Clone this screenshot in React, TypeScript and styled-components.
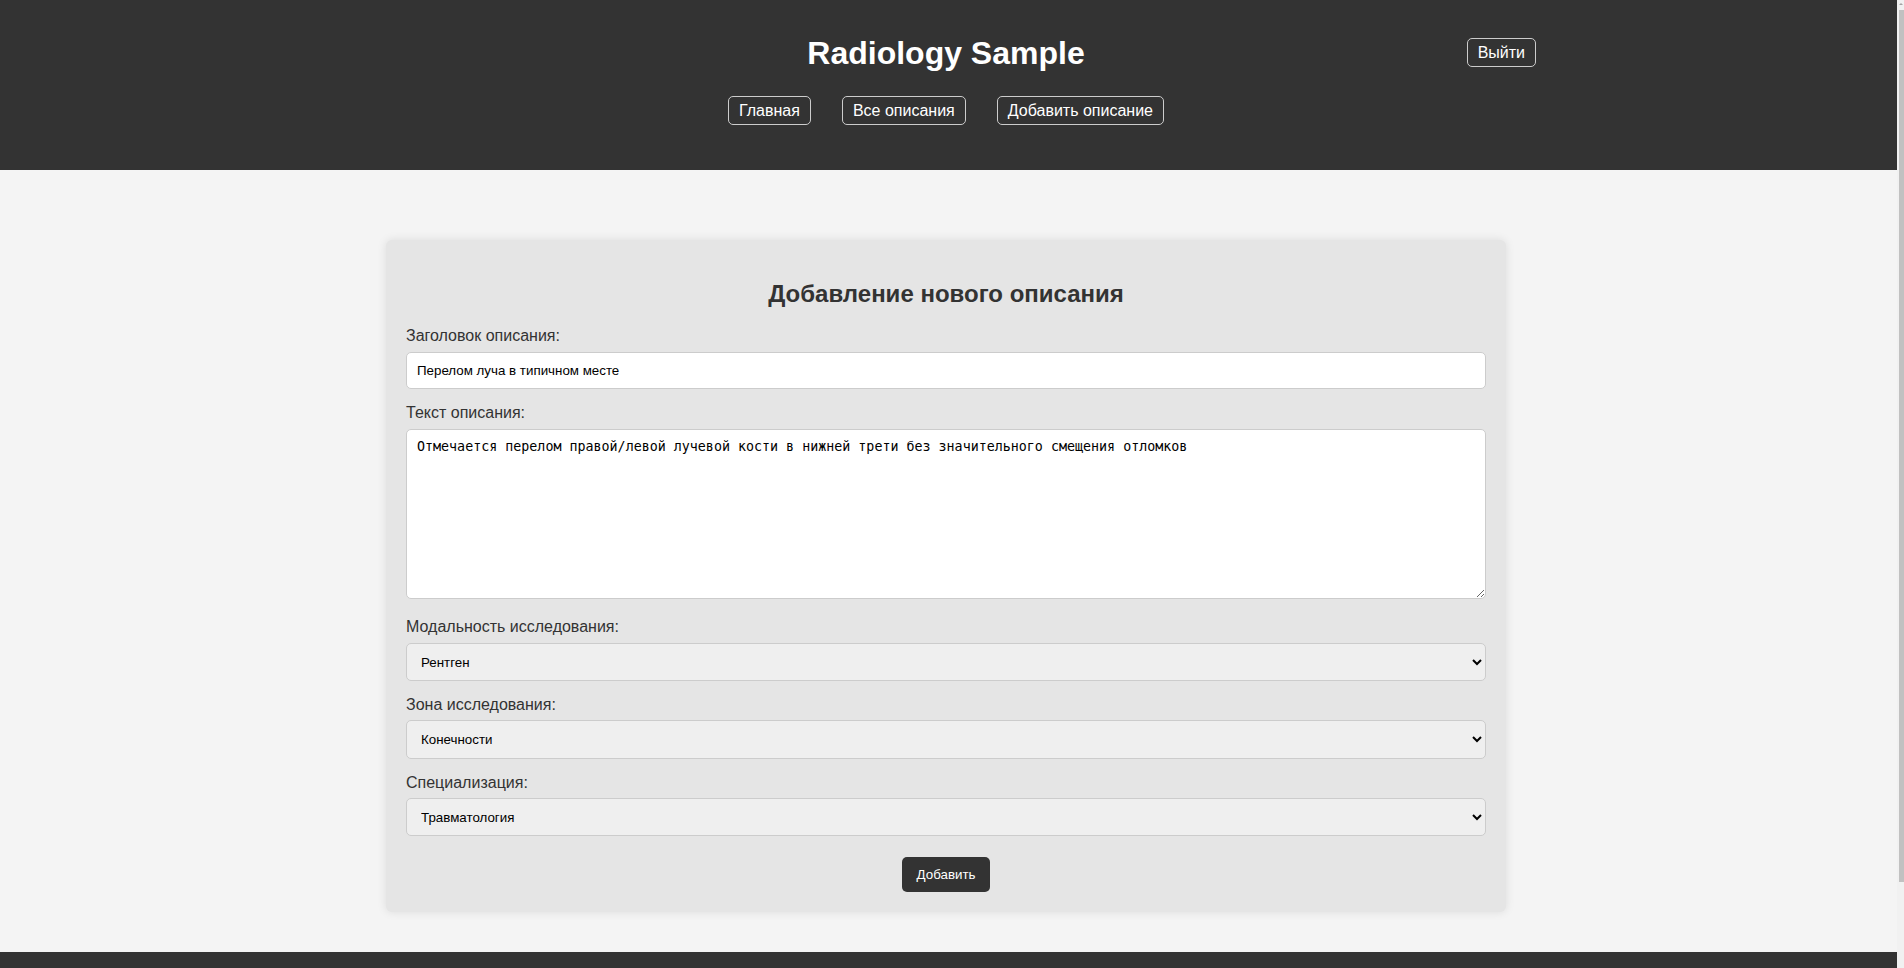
import React from "react";
import styled, { createGlobalStyle } from "styled-components";

const GlobalStyle = createGlobalStyle`
  html, body {
    margin: 0;
    padding: 0;
    overflow: hidden;
  }
  body {
    font-family: "Liberation Sans", Arial, sans-serif;
    background: #f4f4f4;
    color: #333;
  }
  * { box-sizing: border-box; }
`;

const Viewport = styled.div`
  display: flex;
  height: 100vh;
`;

const Page = styled.div`
  flex: 1;
  min-width: 0;
  overflow-y: auto;
  scrollbar-width: none;
  &::-webkit-scrollbar { display: none; }
`;

const ScrollTrack = styled.div`
  width: 7px;
  flex: none;
  background: #f1f1f1;
  display: flex;
  flex-direction: column;
  align-items: flex-end;
  padding-top: 3px;
`;

const ScrollArrow = styled.div`
  width: 0;
  height: 0;
  margin-right: 1px;
  border-left: 2px solid transparent;
  border-right: 2px solid transparent;
  border-bottom: 2px solid #a3a3a3;
`;

const ScrollThumb = styled.div`
  width: 5px;
  height: 872px;
  margin-top: 5px;
  background: #c1c1c1;
`;

const Header = styled.header`
  background: #333;
  color: #fff;
  padding: 35px 5px 45px 0;
`;

const TopRow = styled.div`
  display: grid;
  grid-template-columns: 1fr auto 1fr;
  align-items: center;
  max-width: 1200px;
  margin: 0 auto;
`;

const Title = styled.h1`
  grid-column: 2;
  margin: 0;
  font-size: 32px;
  font-weight: bold;
  line-height: 36.8px;
  color: #fff;
`;

const OutlineButton = styled.a`
  display: inline-block;
  padding: 5px 10px;
  font-size: 16px;
  line-height: 17px;
  color: #fff;
  text-decoration: none;
  border: 1px solid #ccc;
  border-radius: 5px;
  background: transparent;
  cursor: pointer;
`;

const LogoutButton = styled(OutlineButton)`
  grid-column: 3;
  justify-self: end;
  margin-right: 10px;
  margin-bottom: 2px;
`;

const Nav = styled.nav`
  display: flex;
  justify-content: center;
  gap: 31px;
  margin-top: 24px;
`;

const Main = styled.main`
  padding: 70px 5px 40px 0;
`;

const Card = styled.div`
  width: 1120px;
  margin: 0 auto;
  padding: 20px;
  background: #e5e5e5;
  border-radius: 6px;
  box-shadow: 0 0 10px rgba(0, 0, 0, 0.1);
`;

const CardTitle = styled.h2`
  margin: 20px 0;
  font-size: 24px;
  line-height: 27.6px;
  text-align: center;
  color: #333;
`;

const FormGroup = styled.div`
  margin-bottom: 15px;
`;

const Label = styled.label`
  display: block;
  font-size: 16px;
  line-height: 18.4px;
  margin-bottom: 6px;
  color: #333;
`;

const fieldBase = `
  width: 100%;
  padding: 10px;
  border: 1px solid #ccc;
  border-radius: 5px;
  font-family: "Liberation Sans", Arial, sans-serif;
  font-size: 13.333px;
  color: #000;
`;

const TextInput = styled.input`
  ${fieldBase}
  display: block;
  background: #fff;
  height: 37.3px;
  outline: none;
`;

const TextArea = styled.textarea`
  ${fieldBase}
  display: inline-block;
  vertical-align: baseline;
  background: #fff;
  height: 170.6px;
  padding-top: 9px;
  font-family: "DejaVu Sans Mono", monospace;
  resize: vertical;
  outline: none;
`;

const Select = styled.select`
  ${fieldBase}
  display: block;
  height: 38.4px;
  background-color: #efefef;
  outline: none;
`;

const SubmitRow = styled.div`
  text-align: center;
  padding-top: 6px;
`;

const SubmitButton = styled.button`
  padding: 10px 15px;
  border: none;
  border-radius: 5px;
  background: #333;
  color: #fff;
  font-family: "Liberation Sans", Arial, sans-serif;
  font-size: 13.333px;
  line-height: 15px;
  cursor: pointer;
`;

const Footer = styled.footer`
  background: #333;
  height: 88px;
`;

export default function App() {
  return (
    <>
      <GlobalStyle />
      <Viewport>
        <Page>
          <Header>
            <TopRow>
              <Title>Radiology Sample</Title>
              <LogoutButton href="#">Выйти</LogoutButton>
            </TopRow>
            <Nav>
              <OutlineButton href="#">Главная</OutlineButton>
              <OutlineButton href="#">Все описания</OutlineButton>
              <OutlineButton href="#">Добавить описание</OutlineButton>
            </Nav>
          </Header>
          <Main>
            <Card>
              <CardTitle>Добавление нового описания</CardTitle>
              <form onSubmit={(e) => e.preventDefault()}>
                <FormGroup>
                  <Label htmlFor="title">Заголовок описания:</Label>
                  <TextInput
                    id="title"
                    type="text"
                    defaultValue="Перелом луча в типичном месте"
                  />
                </FormGroup>
                <FormGroup>
                  <Label htmlFor="text">Текст описания:</Label>
                  <TextArea
                    id="text"
                    defaultValue="Отмечается перелом правой/левой лучевой кости в нижней трети без значительного смещения отломков"
                  />
                </FormGroup>
                <FormGroup>
                  <Label htmlFor="modality">Модальность исследования:</Label>
                  <Select id="modality" defaultValue="xray">
                    <option value="xray">Рентген</option>
                    <option value="ct">КТ</option>
                    <option value="mri">МРТ</option>
                  </Select>
                </FormGroup>
                <FormGroup>
                  <Label htmlFor="zone">Зона исследования:</Label>
                  <Select id="zone" defaultValue="limbs">
                    <option value="limbs">Конечности</option>
                    <option value="chest">Грудная клетка</option>
                  </Select>
                </FormGroup>
                <FormGroup>
                  <Label htmlFor="spec">Специализация:</Label>
                  <Select id="spec" defaultValue="trauma">
                    <option value="trauma">Травматология</option>
                    <option value="neuro">Неврология</option>
                  </Select>
                </FormGroup>
                <SubmitRow>
                  <SubmitButton type="submit">Добавить</SubmitButton>
                </SubmitRow>
              </form>
            </Card>
          </Main>
          <Footer />
        </Page>
        <ScrollTrack aria-hidden="true">
          <ScrollArrow />
          <ScrollThumb />
        </ScrollTrack>
      </Viewport>
    </>
  );
}
